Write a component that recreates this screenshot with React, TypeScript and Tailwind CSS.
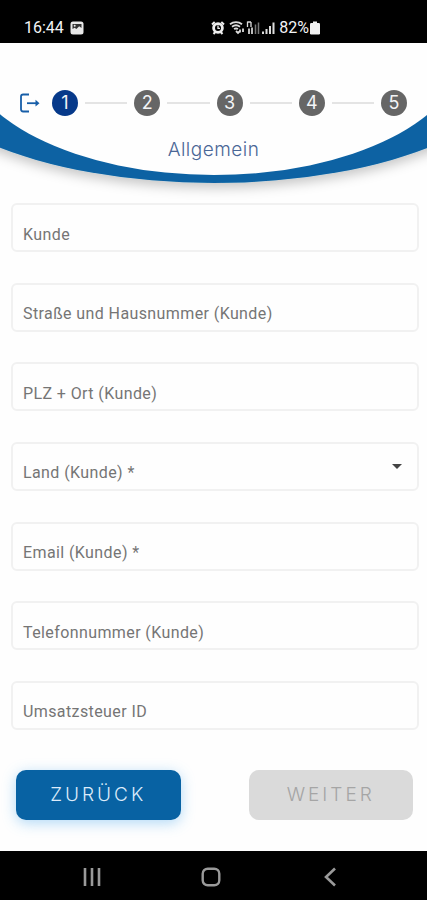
import { Fragment } from 'react';

interface Field {
  id: string;
  label: string;
  type: 'text' | 'email' | 'tel' | 'select';
}

const fields: Field[] = [
  { id: 'kunde', label: 'Kunde', type: 'text' },
  { id: 'strasse', label: 'Straße und Hausnummer (Kunde)', type: 'text' },
  { id: 'ort', label: 'PLZ + Ort (Kunde)', type: 'text' },
  { id: 'land', label: 'Land (Kunde) *', type: 'select' },
  { id: 'email', label: 'Email (Kunde) *', type: 'email' },
  { id: 'telefon', label: 'Telefonnummer (Kunde)', type: 'tel' },
  { id: 'ust', label: 'Umsatzsteuer ID', type: 'text' },
];

const steps = [1, 2, 3, 4, 5];

function StatusBar() {
  return (
    <div className="flex h-[43px] items-end bg-black pr-[107px] pb-[7px] pl-6 font-['Roboto',sans-serif] text-base leading-4 text-gray-100">
      <div className="flex flex-1 items-center gap-[6px]">
        <span>16:44</span>
        <svg className="h-[14px] w-[14px]" viewBox="0 0 14 14">
          <rect x="0.5" y="0.5" width="13" height="13" rx="2.5" fill="#e8e8e8" />
          <path d="M2.5 3h9v4L9.2 5.3 6.4 8 4.6 6.8 2.5 8z" fill="#333" />
          <circle cx="4.7" cy="4.8" r="1" fill="#e8e8e8" />
        </svg>
      </div>
      <div className="flex items-center gap-1">
        <svg className="h-4 w-[14px]" viewBox="0 0 14 16" fill="none" stroke="#eee">
          <circle cx="7" cy="8" r="4.4" strokeWidth="2.8" />
          <path d="M7 5.5V8.4h2" strokeWidth="1.3" />
          <path d="M1 4.5 3.7 2M13 4.5 10.3 2M2.5 14l1.8-2M11.5 14l-1.8-2" strokeWidth="2" />
        </svg>
        <svg className="h-4 w-[46px]" viewBox="0 0 46 16" fill="none" stroke="#ddd">
          <path d="M1 4.2C4.500 1.3 9.500 1.3 13 4.2M3 6.7c2.500-1.8 5.500-1.8 8 0M5 9.100c1.3-.8 2.700-.8 4 0" strokeWidth="1.8" />
          <path d="M7 11 9 13l2-2M11 9.500v3M14 8.500V12" strokeWidth="1.8" />
          <path d="M18.500 1.500v5.500M22 2v5M18.500 2h3.500" strokeWidth="1.3" />
          <path d="M20 8.500V14M23 7.500V14" strokeWidth="1.700" />
          <path d="M26.500 4.500V14M29.500 2.500V14" stroke="#777" strokeWidth="1.500" />
          <path d="M34 11.500V14M37.500 9V14M41 6V14M44.500 2.500V14" strokeWidth="2" />
        </svg>
        <span className="flex items-center gap-px">
          82%
          <svg className="h-[14px] w-[10px]" viewBox="0 0 10 14" fill="#f2f2f2">
            <rect x="3" y="0.5" width="4" height="2.5" />
            <rect x="0" y="2" width="10" height="11.5" rx="1.2" />
          </svg>
        </span>
      </div>
    </div>
  );
}

function Header() {
  return (
    <header className="relative h-40 shrink-0">
      <svg className="absolute inset-0 h-full w-full" viewBox="0 0 427 160" preserveAspectRatio="none" aria-hidden="true">
        <defs>
          <filter id="shade" x="-10%" y="-10%" width="120%" height="130%">
            <feDropShadow dx="0" dy="5" stdDeviation="6" floodColor="#000" floodOpacity="0.22" />
          </filter>
        </defs>
        <ellipse cx="214" cy="3" rx="320" ry="137" fill="#0862a3" filter="url(#shade)" />
        <ellipse cx="214" cy="6" rx="250" ry="126" fill="#fefefe" />
      </svg>
      <div className="relative flex flex-col">
        <div className="flex items-center px-5 pt-[47px]">
          <button type="button" aria-label="Abmelden" className="mr-3 text-[#175ea8]">
            <svg className="h-5 w-5" viewBox="0 0 20 20" fill="none" stroke="currentColor" strokeWidth="1.8">
              <path d="M9 1.5H3.2Q1 1.5 1 3.7v12.600Q1 18.500 3.2 18.500H9" />
              <path d="M7 10.200h10" />
              <path d="M15.500 6.800 19.500 10.200 15.500 13.600z" fill="currentColor" stroke="none" />
            </svg>
          </button>
          {steps.map((step) => (
            <Fragment key={step}>
              {step > 1 && <div className="mx-[7px] h-[2px] flex-1 bg-[#e4e4e4]" />}
              <div
                className={`flex h-[26px] w-[26px] items-center justify-center rounded-full font-['Inter',sans-serif] text-lg text-gray-100 ${
                  step === 1 ? 'bg-[#06398a]' : 'bg-[#666666]'
                }`}
              >
                {step}
              </div>
            </Fragment>
          ))}
        </div>
        <h1 className="pt-5 text-center font-['Inter',sans-serif] text-[19px] leading-7 font-light tracking-wide text-[#4a6796]">
          Allgemein
        </h1>
      </div>
    </header>
  );
}

function FormField({ field }: { field: Field }) {
  const control =
    'col-start-1 row-start-1 h-[49px] w-full appearance-none rounded-md border-2 border-[#f1f1f1] bg-transparent px-3 pt-3 outline-none focus:border-[#0862a3]';

  return (
    <div className="grid items-center">
      {field.type === 'select' ? (
        <>
          <select id={field.id} className={control} defaultValue="">
            <option value=""></option>
          </select>
          <svg className="pointer-events-none col-start-1 row-start-1 mr-[17px] h-[5px] w-[10px] justify-self-end" viewBox="0 0 10 5" fill="#444">
            <path d="M0 0h10L5 5z" />
          </svg>
        </>
      ) : (
        <input id={field.id} type={field.type} className={control} />
      )}
      <label
        htmlFor={field.id}
        className="pointer-events-none col-start-1 row-start-1 px-3 pt-[14px] text-base leading-5 tracking-wide text-[#757575]"
      >
        {field.label}
      </label>
    </div>
  );
}

function NavBar() {
  return (
    <nav className="grid h-[49px] shrink-0 grid-cols-3 items-center justify-items-center bg-black pr-9 pl-8 pt-[2px] text-[#9a9a9a]">
      <button type="button" aria-label="Übersicht">
        <svg className="h-5 w-5" viewBox="0 0 20 20" stroke="currentColor" strokeWidth="2.6">
          <path d="M3 1v18M10 1v18M17 1v18" />
        </svg>
      </button>
      <button type="button" aria-label="Startseite">
        <svg className="h-5 w-5" viewBox="0 0 20 20" fill="none" stroke="currentColor" strokeWidth="2.4">
          <rect x="1.7" y="1.7" width="16.6" height="16.6" rx="5" />
        </svg>
      </button>
      <button type="button" aria-label="Zurück">
        <svg className="h-5 w-5" viewBox="0 0 20 20" fill="none" stroke="currentColor" strokeWidth="2.6">
          <path d="M14 1.500 5 10l9 8.500" />
        </svg>
      </button>
    </nav>
  );
}

export default function App() {
  return (
    <div className="flex min-h-screen flex-col bg-[#fefefe]">
      <StatusBar />
      <Header />
      <form className="flex flex-1 flex-col font-['Roboto',sans-serif]">
        <div className="flex flex-1 flex-col justify-between gap-3 pr-2 pl-[11px]">
          {fields.map((field) => (
            <FormField key={field.id} field={field} />
          ))}
        </div>
        <div className="flex justify-between gap-[68px] pt-10 pr-[14px] pb-[31px] pl-4 font-['Inter',sans-serif] text-[19px] font-light tracking-[3px]">
          <button
            type="button"
            className="h-[50px] flex-1 rounded-[10px] bg-[#0862a3] text-[#dcebfa] shadow-[0_3px_14px_rgba(60,160,235,0.4)]"
          >
            ZURÜCK
          </button>
          <button type="button" disabled className="h-[50px] flex-1 rounded-[10px] bg-[#dadada] text-[#a5a5a5]">
            WEITER
          </button>
        </div>
      </form>
      <NavBar />
    </div>
  );
}
